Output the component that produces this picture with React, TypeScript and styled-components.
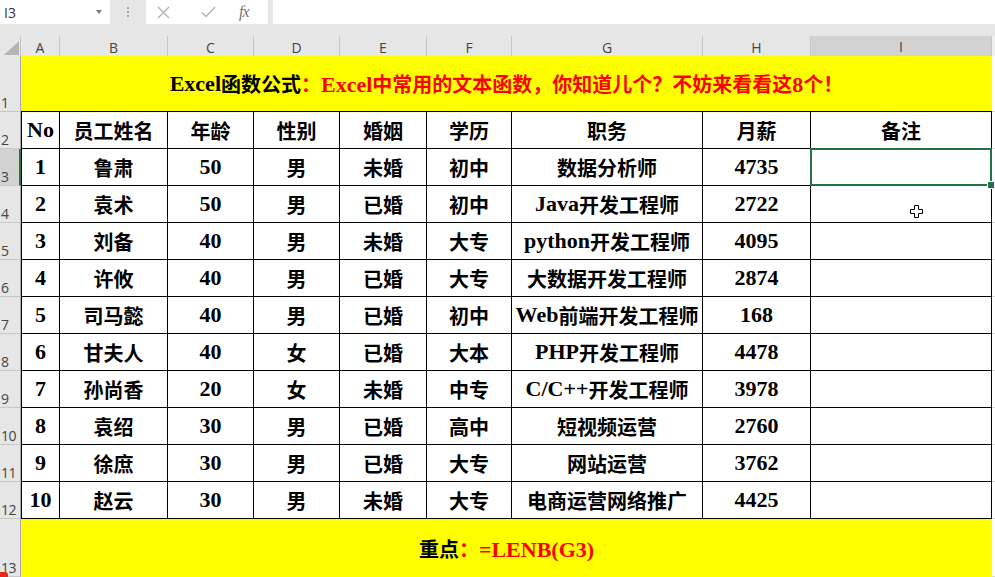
import React from "react";
import styled, { createGlobalStyle, css } from "styled-components";

const COLS = "21px 39px 108px 86px 86px 87px 85px 191px 108px 181px 3px";
const GREEN = "#217346";
const HEADER_BG = "#e6e6e6";
const HEADER_SEL = "#d2d2d2";

const GlobalStyle = createGlobalStyle`
  html, body { margin: 0; padding: 0; background: #fff; overflow: hidden; }
  * { box-sizing: border-box; }
`;

const Screen = styled.div`
  position: relative;
  width: 995px;
  height: 577px;
  overflow: hidden;
  background: #fff;
`;

const FormulaBar = styled.div`
  display: flex;
  height: 24px;
  background: ${HEADER_BG};
`;

const NameBox = styled.div`
  width: 110px;
  background: #fff;
  display: flex;
  align-items: center;
  justify-content: space-between;
  padding: 0 8px 0 4px;
  font: 14px "Open Sans", "Noto Sans", sans-serif;
  color: #333;
`;

const DropArrow = styled.span`
  width: 0;
  height: 0;
  border-left: 3px solid transparent;
  border-right: 3px solid transparent;
  border-top: 4px solid #777;
`;

const Grip = styled.div`
  width: 36px;
  display: flex;
  flex-direction: column;
  align-items: center;
  justify-content: center;
  gap: 2px;
`;

const GripDot = styled.span`
  width: 2px;
  height: 2px;
  background: #a8a8a8;
`;

const IconBox = styled.div`
  width: 122px;
  background: #fff;
  display: flex;
  align-items: center;
  padding-left: 11px;
`;

const IconSlot = styled.span<{ $w: number }>`
  width: ${(p) => p.$w}px;
  display: flex;
  align-items: center;
  justify-content: flex-start;
`;

const Fx = styled.span`
  font: italic 16px "Liberation Serif", serif;
  color: #777;
  letter-spacing: -1px;
`;

const FormulaInput = styled.div`
  flex: 1;
  margin-left: 5px;
  background: #fff;
`;

const Band = styled.div`
  height: 12px;
  background: ${HEADER_BG};
`;

const Row = styled.div<{ $h: number }>`
  display: grid;
  grid-template-columns: ${COLS};
  height: ${(p) => p.$h}px;
`;

const Corner = styled.div`
  background: ${HEADER_BG};
  border-bottom: 1px solid #ababab;
  border-right: 1px solid #c6c6c6;
  display: flex;
  align-items: flex-end;
  justify-content: flex-end;
  padding: 0 1px 2px 0;
`;

const ColHeader = styled.div<{ $selected?: boolean }>`
  background: ${(p) => (p.$selected ? HEADER_SEL : HEADER_BG)};
  border-right: 1px solid #c6c6c6;
  border-bottom: ${(p) => (p.$selected ? `2px solid ${GREEN}` : "1px solid #ababab")};
  display: flex;
  align-items: center;
  justify-content: center;
  font: 14px "Open Sans", "Noto Sans", sans-serif;
  color: #444;
  padding-top: 1px;
`;

const RowHeader = styled.div<{ $selected?: boolean }>`
  background: ${(p) => (p.$selected ? HEADER_SEL : HEADER_BG)};
  border-bottom: 1px solid #c8c8c8;
  border-right: ${(p) => (p.$selected ? `2px solid ${GREEN}` : "1px solid #ababab")};
  display: flex;
  align-items: flex-end;
  padding: 0 0 0 1px;
  font: 14px "Open Sans", "Noto Sans", sans-serif;
  line-height: 16px;
  color: #444;
  overflow: hidden;
  white-space: nowrap;
  letter-spacing: -0.5px;
`;

const cellFont = css`
  font-family: "Liberation Serif", "Noto Sans CJK SC", serif;
  font-weight: 700;
  font-size: 20px;
`;

const Latin = styled.span`
  font-size: 22px;
  line-height: 1;
`;

const Banner = styled.div<{ $bordered?: boolean }>`
  grid-column: 2 / 11;
  background: #ffff00;
  border-bottom: ${(p) => (p.$bordered ? "1px solid #000" : "none")};
  display: flex;
  align-items: center;
  justify-content: center;
  ${cellFont};
  color: #000;
  white-space: nowrap;
`;

const Red = styled.span`
  color: #ff0000;
`;

const Cell = styled.div<{ $first?: boolean; $active?: boolean }>`
  position: relative;
  border-right: 1px solid #000;
  border-bottom: 1px solid #000;
  border-left: ${(p) => (p.$first ? "1px solid #000" : "none")};
  display: flex;
  align-items: center;
  justify-content: center;
  ${cellFont};
  color: #000;
  white-space: nowrap;
  ${(p) =>
    p.$active &&
    css`
      &::after {
        content: "";
        position: absolute;
        left: -1px;
        top: -1px;
        right: -1px;
        bottom: -1px;
        border: 2px solid ${GREEN};
      }
      &::before {
        content: "";
        position: absolute;
        right: -4px;
        bottom: -4px;
        width: 6px;
        height: 6px;
        background: ${GREEN};
        border: 1px solid #fff;
        z-index: 2;
      }
    `}
`;

const Filler = styled.div<{ $header?: boolean }>`
  background: ${(p) => (p.$header ? "#efefef" : "#fff")};
  border-bottom: 1px solid ${(p) => (p.$header ? "#ababab" : "#dadada")};
`;

const Cursor = styled.svg`
  position: absolute;
  left: 910px;
  top: 205px;
`;

const RecMark = styled.span`
  position: absolute;
  left: 0;
  bottom: 0;
  width: 8px;
  height: 5px;
  background: #e8261a;
  border-radius: 0 3px 0 0;
`;

function Mixed({ text }: { text: string }) {
  const parts = text.split(/([\x20-\x7e]+)/).filter((s) => s.length > 0);
  return (
    <>
      {parts.map((p, i) =>
        /^[\x20-\x7e]+$/.test(p) ? <Latin key={i}>{p}</Latin> : <React.Fragment key={i}>{p}</React.Fragment>
      )}
    </>
  );
}

const letters = ["A", "B", "C", "D", "E", "F", "G", "H", "I"];
const heads = ["No", "员工姓名", "年龄", "性别", "婚姻", "学历", "职务", "月薪", "备注"];
const data: string[][] = [
  ["1", "鲁肃", "50", "男", "未婚", "初中", "数据分析师", "4735"],
  ["2", "袁术", "50", "男", "已婚", "初中", "Java开发工程师", "2722"],
  ["3", "刘备", "40", "男", "未婚", "大专", "python开发工程师", "4095"],
  ["4", "许攸", "40", "男", "已婚", "大专", "大数据开发工程师", "2874"],
  ["5", "司马懿", "40", "男", "已婚", "初中", "Web前端开发工程师", "168"],
  ["6", "甘夫人", "40", "女", "已婚", "大本", "PHP开发工程师", "4478"],
  ["7", "孙尚香", "20", "女", "未婚", "中专", "C/C++开发工程师", "3978"],
  ["8", "袁绍", "30", "男", "已婚", "高中", "短视频运营", "2760"],
  ["9", "徐庶", "30", "男", "已婚", "大专", "网站运营", "3762"],
  ["10", "赵云", "30", "男", "未婚", "大专", "电商运营网络推广", "4425"],
];

export default function App() {
  return (
    <Screen>
      <GlobalStyle />
      <FormulaBar>
        <NameBox>
          <span>I3</span>
          <DropArrow />
        </NameBox>
        <Grip>
          <GripDot />
          <GripDot />
          <GripDot />
        </Grip>
        <IconBox>
          <IconSlot $w={44}>
            <svg width="13" height="13" viewBox="0 0 13 13">
              <path d="M1 1 L12 12 M12 1 L1 12" stroke="#b0b0b0" strokeWidth="1.3" fill="none" />
            </svg>
          </IconSlot>
          <IconSlot $w={38}>
            <svg width="15" height="12" viewBox="0 0 15 12">
              <path d="M1 6.5 L5 10.5 L14 1" stroke="#b0b0b0" strokeWidth="1.3" fill="none" />
            </svg>
          </IconSlot>
          <IconSlot $w={20}>
            <Fx>fx</Fx>
          </IconSlot>
        </IconBox>
        <FormulaInput />
      </FormulaBar>
      <Band />
      <Row $h={20}>
        <Corner>
          <svg width="15" height="14" viewBox="0 0 15 14">
            <path d="M15 0 L15 14 L0 14 Z" fill="#b4b4b4" />
          </svg>
        </Corner>
        {letters.map((l) => (
          <ColHeader key={l} $selected={l === "I"}>
            {l}
          </ColHeader>
        ))}
        <Filler $header />
      </Row>
      <Row $h={56}>
        <RowHeader>1</RowHeader>
        <Banner $bordered>
          <Mixed text="Excel函数公式" />
          <Red>
            <Mixed text="：Excel中常用的文本函数，你知道儿个？不妨来看看这8个！" />
          </Red>
        </Banner>
        <Filler />
      </Row>
      <Row $h={37}>
        <RowHeader>2</RowHeader>
        {heads.map((h, i) => (
          <Cell key={h} $first={i === 0}>
            <Mixed text={h} />
          </Cell>
        ))}
        <Filler />
      </Row>
      {data.map((r, ri) => (
        <Row $h={37} key={r[0]}>
          <RowHeader $selected={ri === 0}>{ri + 3}</RowHeader>
          {r.map((v, i) => (
            <Cell key={i} $first={i === 0}>
              <Mixed text={v} />
            </Cell>
          ))}
          <Cell $active={ri === 0} />
          <Filler />
        </Row>
      ))}
      <Row $h={58}>
        <RowHeader>13</RowHeader>
        <Banner>
          重点
          <Red>
            <Mixed text="：=LENB(G3)" />
          </Red>
        </Banner>
        <Filler />
      </Row>
      <Cursor width="13" height="13" viewBox="0 0 13 13">
        <path
          d="M4.5 0.5 H8.5 V4.5 H12.5 V8.5 H8.5 V12.5 H4.5 V8.5 H0.5 V4.5 H4.5 Z"
          fill="#fff"
          stroke="#000"
          strokeWidth="1"
        />
      </Cursor>
      <RecMark />
    </Screen>
  );
}
